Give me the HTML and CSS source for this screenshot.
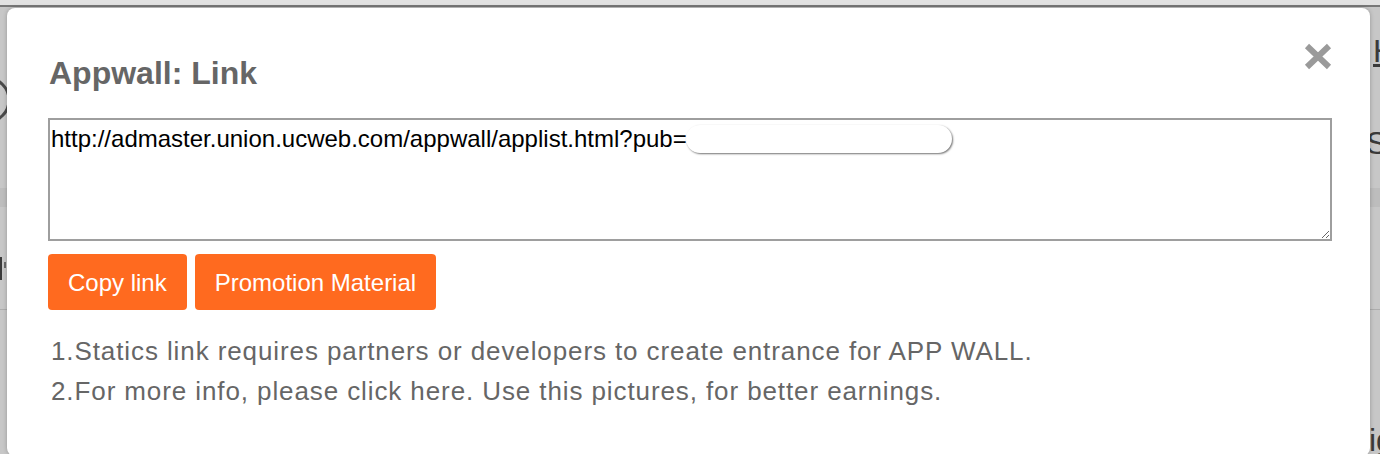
FILE: index.html
```html
<!DOCTYPE html>
<html lang="en">
<head>
<meta charset="utf-8">
<title>Appwall: Link</title>
<link rel="stylesheet" href="styles.css">
</head>
<body>
<div class="page">
  <div class="strip"></div>
  <div class="topline"></div>
  <div class="bg-row bg-row-a">
    <svg class="arc" width="8" height="60" viewBox="0 70 8 60"><circle cx="-13" cy="100" r="22" fill="none" stroke="#4a4a4a" stroke-width="3"/></svg>
    <div class="edge-text">
      <span class="edge-h">H</span>
      <span class="edge-sc">Sc</span>
    </div>
  </div>
  <div class="bg-band"></div>
  <div class="bg-row bg-row-b">
    <div class="edge-glyph"><span class="g1"></span><span class="g2"></span></div>
  </div>
  <div class="bg-rule"></div>
  <div class="bg-row bg-row-c">
    <div class="edge-text"><span class="edge-ig">ig</span></div>
  </div>

  <div class="modal">
    <h2 class="modal-title">Appwall: Link</h2>
    <button class="close" aria-label="Close">
      <svg width="30" height="29" viewBox="0 0 30 29"><path d="M4 4 L26 25 M26 4 L4 25" stroke="#9a9a9a" stroke-width="6" fill="none"/></svg>
    </button>
    <div class="link-box">
      <textarea class="link-area">http://admaster.union.ucweb.com/appwall/applist.html?pub=</textarea>
      <span class="mask"></span>
    </div>
    <div class="actions">
      <button class="btn">Copy link</button>
      <button class="btn">Promotion Material</button>
    </div>
    <div class="notes">
      <p>1.Statics link requires partners or developers to create entrance for APP WALL.</p>
      <p>2.For more info, please click here. Use this pictures, for better earnings.</p>
    </div>
  </div>
</div>
</body>
</html>
```

FILE: styles.css
```css
* { box-sizing: border-box; }
html, body { margin: 0; padding: 0; }
body { font-family: "Liberation Sans", Arial, sans-serif; background: #c7c7c7; }

.page {
  position: relative;
  width: 1380px;
  height: 454px;
  overflow: hidden;
  background: #c7c7c7;
}

.strip { height: 5px; background: #e2e2e2; }
.topline { height: 2px; background: #787878; }

.bg-row { display: flex; justify-content: space-between; }
.bg-row-a { height: 181px; }
.bg-row-b { height: 102px; }
.bg-row-c { height: 150px; }
.bg-band { height: 19px; background: #bdbdbd; }
.bg-rule { height: 1px; background: #adadad; }

.arc { display: block; margin-top: 63px; }

.edge-text {
  width: 14px;
  margin-left: auto;
  display: flex;
  flex-direction: column;
  overflow: hidden;
  font-size: 32px;
  color: #3a3a3a;
  line-height: 36px;
}
.edge-h { padding-left: 7px; margin-top: 26px; text-decoration: underline; }
.edge-sc { margin-top: 56px; white-space: nowrap; padding-left: 0; }
.edge-ig { margin-top: 112px; white-space: nowrap; padding-left: 3px; }

.edge-glyph { position: relative; display: flex; gap: 2px; margin-top: 50px; }
.edge-glyph .g1 { width: 2px; height: 23px; background: #3a3a3a; }
.edge-glyph .g2 { width: 2px; height: 6px; margin-left: 0; margin-top: 5px; background: #6a6a6a; }

.modal {
  position: absolute;
  left: 7px;
  top: 8px;
  width: 1363px;
  height: 448px;
  background: #fff;
  border-radius: 8px;
  box-shadow: 0 0 4px rgba(0, 0, 0, 0.25);
  padding: 47px 38px 0 41px;
}

.modal-title {
  margin: 0 0 0 1px;
  font-size: 32px;
  line-height: 36px;
  font-weight: bold;
  color: #666;
}

.close {
  position: absolute;
  left: 1296px;
  top: 34px;
  width: 30px;
  height: 29px;
  padding: 0;
  border: 0;
  background: none;
}
.close svg { display: block; }

.link-box { position: relative; margin-top: 27px; width: 1284px; }
.link-area {
  display: block;
  width: 1284px;
  height: 123px;
  border: 2px solid #9e9e9e;
  border-radius: 0;
  padding: 5px 1px;
  margin: 0;
  font-family: "Liberation Sans", Arial, sans-serif;
  font-size: 24px;
  line-height: 27px;
  color: #000;
  background: #fff;
  outline: none;
}
.mask {
  position: absolute;
  left: 638px;
  top: 7px;
  width: 266px;
  height: 28px;
  border-radius: 14px;
  background: #fff;
  box-shadow: 1px 1px 2px rgba(0, 0, 0, 0.55);
}

.actions { display: flex; gap: 8px; margin-top: 13px; }
.btn {
  height: 56px;
  padding: 0 20px;
  border: 0;
  border-radius: 4px;
  background: #ff6a1f;
  color: #fff;
  font-family: "Liberation Sans", Arial, sans-serif;
  font-size: 24px;
  padding-top: 2px;
}

.notes {
  margin-top: 21px;
  padding-left: 3px;
  color: #666;
  font-size: 26px;
  line-height: 40px;
  letter-spacing: 0.9px;
}
.notes p { margin: 0; }
```
